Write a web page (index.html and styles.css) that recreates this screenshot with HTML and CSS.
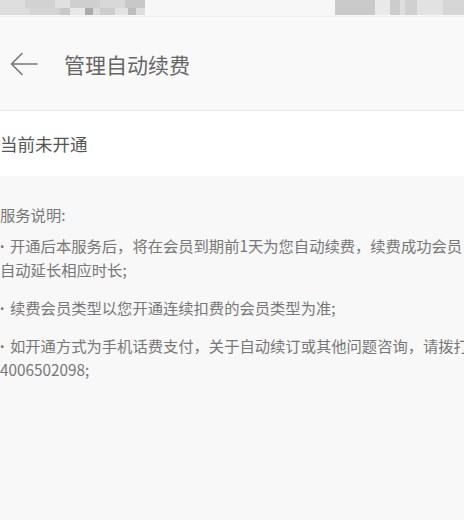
FILE: index.html
```html
<!DOCTYPE html>
<html lang="zh-CN">
<head>
<meta charset="utf-8">
<title>管理自动续费</title>
<link rel="stylesheet" href="styles.css">
</head>
<body>
<div class="page">
  <div class="status">
    <div class="blob blob-left"></div>
    <div class="blob blob-right"></div>
  </div>
  <header class="header">
    <svg class="back" width="28" height="24" viewBox="0 0 28 24" aria-hidden="true">
      <path d="M27 12 H2 M12 1.5 L1.5 12 L12 22.5" fill="none" stroke="#777" stroke-width="1.6" stroke-linecap="round" stroke-linejoin="round"/>
    </svg>
    <h1 class="title">管理自动续费</h1>
  </header>
  <section class="current">当前未开通</section>
  <section class="desc">
    <p class="desc-head">服务说明:</p>
    <p class="item"><span class="dot">·</span>开通后本服务后，将在会员到期前1天为您自动续费，续费成功会员<br>自动延长相应时长;</p>
    <p class="item"><span class="dot">·</span>续费会员类型以您开通连续扣费的会员类型为准;</p>
    <p class="item"><span class="dot">·</span>如开通方式为手机话费支付，关于自动续订或其他问题咨询，请拨打<br>4006502098;</p>
  </section>
</div>
</body>
</html>
```

FILE: styles.css
```css
html, body {
  margin: 0;
  padding: 0;
  background: #f8f8f8;
}
body {
  font-family: "Noto Sans CJK SC", "Noto Sans", sans-serif;
}
.page {
  width: 464px;
  height: 520px;
  overflow: hidden;
  background: #f8f8f8;
}
.status {
  height: 16px;
  display: flex;
  justify-content: space-between;
  background: #f7f7f7;
}
.blob {
  height: 15px;
}
.blob-left {
  width: 145px;
  background:
    linear-gradient(to right,
      #dedede 0, #dedede 25px, #d2d2d2 25px, #d2d2d2 55px, #e0e0e0 55px, #e0e0e0 70px,
      #cfcfcf 70px, #cfcfcf 100px, #d8d8d8 100px, #d8d8d8 125px, #c8c8c8 125px, #c8c8c8 145px) top / 100% 8px no-repeat,
    linear-gradient(to right,
      #dcdcdc 0, #dcdcdc 30px, #d4d4d4 30px, #d4d4d4 60px, #c9c9c9 60px, #c9c9c9 70px,
      #e8e8e8 70px, #e8e8e8 85px, #ababab 85px, #ababab 93px, #dadada 93px, #dadada 100px,
      #cdcdcd 100px, #cdcdcd 115px, #e2e2e2 115px, #e2e2e2 128px, #bdbdbd 128px, #bdbdbd 136px, #dedede 136px) bottom / 100% 7px no-repeat;
}
.blob-right {
  width: 129px;
  background: linear-gradient(to right,
    #cacaca 0, #cacaca 40px, #e9e9e9 40px, #e9e9e9 55px, #cccccc 55px, #cccccc 65px,
    #dedede 65px, #dedede 70px, #d0d0d0 70px, #d0d0d0 82px, #e2e2e2 82px, #e2e2e2 108px,
    #d6d6d6 108px, #d6d6d6 129px);
}
.header {
  height: 93px;
  display: flex;
  align-items: center;
  gap: 26px;
  padding-left: 10px;
  background: #f9f9f9;
  border-top: 1px solid #efefef;
  border-bottom: 1px solid #e6e6e6;
}
.back {
  display: block;
  flex: none;
}
.title {
  margin: 0;
  font-size: 21px;
  font-weight: 400;
  color: #666;
  line-height: 24px;
}
.current {
  height: 65px;
  display: flex;
  align-items: center;
  background: #fff;
  font-size: 17.5px;
  color: #555;
}
.desc {
  padding-top: 27px;
  font-size: 15.3px;
  line-height: 23px;
  color: #777;
  white-space: nowrap;
}
.desc p {
  margin: 0;
}
.desc-head {
  margin-bottom: 8px !important;
}
.item + .item {
  margin-top: 14.5px;
}
.dot {
  display: inline-block;
  width: 10px;
  font-family: "Noto Sans", sans-serif;
  font-weight: 700;
}
```
